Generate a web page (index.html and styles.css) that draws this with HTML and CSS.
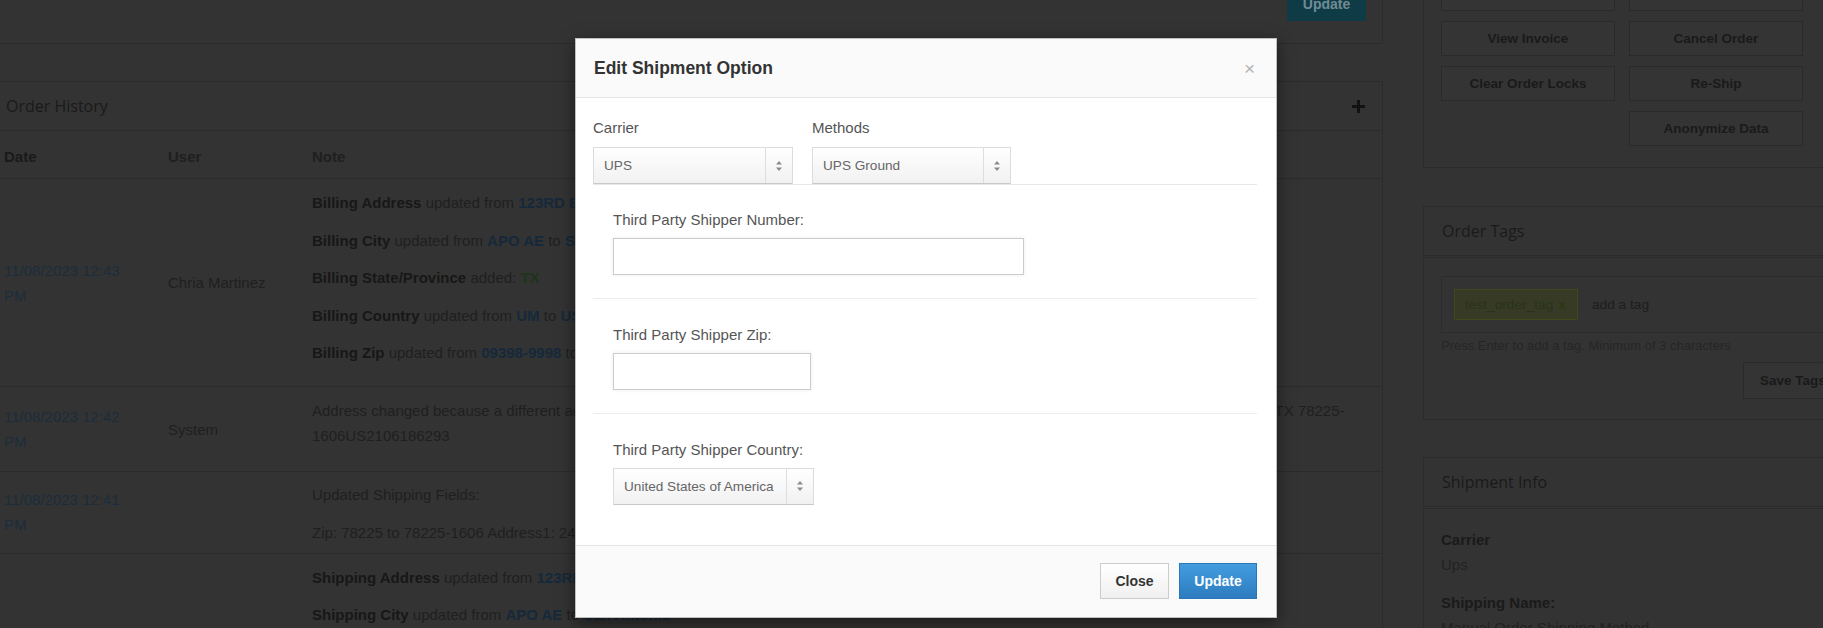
FILE: index.html
```html
<!DOCTYPE html>
<html lang="en">
<head>
<meta charset="utf-8">
<title>Order - Edit Shipment Option</title>
<link rel="stylesheet" href="styles.css">
</head>
<body>
<div class="page">
  <div class="main">
    <div class="panel panel-top">
      <button class="btn-teal">Update</button>
    </div>

    <div class="panel history">
      <div class="panel-heading">
        <h3 class="heading-title">Order History</h3>
        <svg class="plus" width="13" height="13" viewBox="0 0 13 13"><path d="M5 0h3v5h5v3H8v5H5V8H0V5h5z" fill="currentColor"/></svg>
      </div>
      <div class="hrow head">
        <div class="c-date">Date</div>
        <div class="c-user">User</div>
        <div class="c-note">Note</div>
      </div>

      <div class="hrow">
        <div class="c-date"><a class="date-link">11/08/2023 12:43 PM</a></div>
        <div class="c-user">Chria Martinez</div>
        <div class="c-note note-long">
          <p><b>Billing Address</b> updated from <b class="val">123RD BN 6</b> to <b class="val">2400 W Military Dr</b></p>
          <p><b>Billing City</b> updated from <b class="val">APO AE</b> to <b class="val">San Antonio</b></p>
          <p><b>Billing State/Province</b> added: <b class="val-add">TX</b></p>
          <p><b>Billing Country</b> updated from <b class="val">UM</b> to <b class="val">US</b></p>
          <p><b>Billing Zip</b> updated from <b class="val">09398-9998</b> to <b class="val">78225-1606</b></p>
        </div>
      </div>

      <div class="hrow">
        <div class="c-date"><a class="date-link">11/08/2023 12:42 PM</a></div>
        <div class="c-user">System</div>
        <div class="c-note note-mid">
          <p>Address changed because a different address was returned by the address validation service now, for this order: 2400 W Military Dr San Antonio TX 78225-<br>1606US2106186293</p>
        </div>
      </div>

      <div class="hrow">
        <div class="c-date"><a class="date-link">11/08/2023 12:41 PM</a></div>
        <div class="c-user"></div>
        <div class="c-note note-short">
          <p>Updated Shipping Fields:</p>
          <p>Zip: 78225 to 78225-1606 Address1: 2400 W Military Dr to 2400 W MILITARY DR</p>
        </div>
      </div>

      <div class="hrow">
        <div class="c-date"><a class="date-link">11/08/2023 12:40 PM</a></div>
        <div class="c-user">Chria Martinez</div>
        <div class="c-note note-long">
          <p><b>Shipping Address</b> updated from <b class="val">123RD BN 6</b> to <b class="val">2400 W Military Dr</b></p>
          <p><b>Shipping City</b> updated from <b class="val">APO AE</b> to <b class="val">San Antonio</b></p>
          <p><b>Shipping State/Province</b> added: <b class="val-add">TX</b></p>
          <p><b>Shipping Country</b> updated from <b class="val">UM</b> to <b class="val">US</b></p>
          <p><b>Shipping Zip</b> updated from <b class="val">09398-9998</b> to <b class="val">78225-1606</b></p>
        </div>
      </div>
    </div>
  </div>

  <div class="side">
    <div class="panel actions">
      <div class="action-grid">
        <button class="btn-ghost" aria-label="Edit Order"></button>
        <button class="btn-ghost" aria-label="Print Packing Slip"></button>
        <button class="btn-ghost">View Invoice</button>
        <button class="btn-ghost">Cancel Order</button>
        <button class="btn-ghost">Clear Order Locks</button>
        <button class="btn-ghost">Re-Ship</button>
        <button class="btn-ghost col2">Anonymize Data</button>
      </div>
    </div>

    <div class="panel side-heading tags-heading"><h3 class="heading-title">Order Tags</h3></div>
    <div class="panel side-body tags-body">
      <div class="tag-box">
        <span class="tag">test_order_tag <b class="tag-x">x</b></span>
        <span class="tag-input">add a tag</span>
      </div>
      <div class="help">Press Enter to add a tag. Minimum of 3 characters</div>
      <div class="save-row"><button class="btn-ghost save">Save Tags</button></div>
    </div>

    <div class="panel side-heading ship-heading"><h3 class="heading-title">Shipment Info</h3></div>
    <div class="panel side-body ship-body">
      <div class="info-label">Carrier</div>
      <div class="info-value">Ups</div>
      <div class="info-label second">Shipping Name:</div>
      <div class="info-value">Manual Order Shipping Method</div>
    </div>
  </div>
</div>

<div class="modal">
  <div class="modal-header">
    <h4 class="modal-title">Edit Shipment Option</h4>
    <span class="modal-close">×</span>
  </div>
  <div class="modal-body">
    <div class="select-row">
      <div class="field">
        <label class="lbl">Carrier</label>
        <div class="select w-carrier"><span class="select-text">UPS</span><span class="select-arrow"><svg width="6" height="10" viewBox="0 0 6 10"><path d="M3 0L6 3.5H0z M3 10L0 6.5H6z" fill="#8a8a8a"/></svg></span></div>
      </div>
      <div class="field">
        <label class="lbl">Methods</label>
        <div class="select w-method"><span class="select-text">UPS Ground</span><span class="select-arrow"><svg width="6" height="10" viewBox="0 0 6 10"><path d="M3 0L6 3.5H0z M3 10L0 6.5H6z" fill="#8a8a8a"/></svg></span></div>
      </div>
    </div>

    <div class="section">
      <label class="lbl">Third Party Shipper Number:</label>
      <div class="input w-number"></div>
    </div>
    <div class="section">
      <label class="lbl">Third Party Shipper Zip:</label>
      <div class="input w-zip"></div>
    </div>
    <div class="section last">
      <label class="lbl">Third Party Shipper Country:</label>
      <div class="select w-country"><span class="select-text">United States of America</span><span class="select-arrow"><svg width="6" height="10" viewBox="0 0 6 10"><path d="M3 0L6 3.5H0z M3 10L0 6.5H6z" fill="#8a8a8a"/></svg></span></div>
    </div>
  </div>
  <div class="modal-footer">
    <button class="btn-close">Close</button>
    <button class="btn-primary">Update</button>
  </div>
</div>
</body>
</html>
```

FILE: styles.css
```css
* { box-sizing: border-box; }

html, body {
  margin: 0;
  padding: 0;
}

body {
  width: 1823px;
  height: 628px;
  overflow: hidden;
  background: #333333;
  font-family: "Liberation Sans", Arial, sans-serif;
  font-size: 15px;
  color: #232323;
  position: relative;
}

button { font-family: "Liberation Sans", Arial, sans-serif; }

.page {
  display: flex;
  align-items: flex-start;
}

.main {
  width: 1384px;
  margin-left: -1px;
  flex: none;
}

.side {
  width: 440px;
  margin-left: 40px;
  flex: none;
}

.panel {
  border: 1px solid #2b2b2b;
}

/* top panel */
.panel-top {
  height: 44px;
  border-top: none;
  display: flex;
  justify-content: flex-end;
  padding-right: 16px;
}

.btn-teal {
  margin-top: -13px;
  width: 79px;
  height: 34px;
  border: none;
  background: #0f3b47;
  color: #6f8c95;
  font-weight: bold;
  font-size: 14px;
}

/* order history */
.history {
  margin-top: 37px;
}

.panel-heading {
  height: 49px;
  border-bottom: 1px solid #2b2b2b;
  display: flex;
  align-items: center;
  justify-content: space-between;
  padding: 0 17px 0 6px;
}

.heading-title {
  margin: 0;
  font-family: "Open Sans", "Liberation Sans", sans-serif;
  font-weight: normal;
  font-size: 16px;
  color: #1a1a1a;
}

.plus {
  color: #121212;
}

.hrow {
  display: grid;
  grid-template-columns: 164px 144px 1fr;
  border-bottom: 1px solid #2b2b2b;
}

.hrow.head {
  height: 48px;
  padding-top: 3px;
  align-items: center;
  font-weight: bold;
  color: #1a1a1a;
}

.hrow:last-child { border-bottom: none; }

.c-date {
  padding: 0 30px 0 4px;
  align-self: center;
  line-height: 25px;
}

.c-user {
  padding-left: 4px;
  align-self: center;
  color: #1f1f1f;
}

.date-link {
  color: #1b2d3c;
}

.c-note {
  padding: 11px 36px 10px 4px;
  color: #1f1f1f;
}

.c-note p {
  margin: 0 0 12.5px;
  line-height: 25px;
}

.c-note p:last-child { margin-bottom: 0; }

.c-note b { color: #171717; }
.c-note b.val { color: #15293b; }
.c-note b.val-add { color: #1d3518; }

.note-long { padding-bottom: 21px; }
.note-mid { padding-bottom: 23px; }
.note-short { padding-top: 10px; padding-bottom: 8px; }

/* side */
.actions {
  margin-top: -45px;
  padding: 20px 18px 21px 17px;
}

.action-grid {
  display: grid;
  grid-template-columns: 174px 174px;
  grid-auto-rows: 35px;
  column-gap: 14px;
  row-gap: 10px;
}

.btn-ghost {
  background: #343434;
  border: 1px solid #2a2a2a;
  color: #1a1a1a;
  font-weight: bold;
  font-size: 13.5px;
  padding: 0;
}

.col2 { grid-column: 2; }

.side-heading {
  height: 50px;
  display: flex;
  align-items: center;
  padding-left: 18px;
}

.side-body {
  margin-top: 1px;
  padding: 18px 18px 20px 17px;
}

.tags-heading { margin-top: 38px; }

.tag-box {
  height: 57px;
  border: 1px solid #2c2c2c;
  padding: 13px 12px;
  display: flex;
  align-items: center;
  gap: 14px;
}

.tag {
  height: 31px;
  display: inline-flex;
  align-items: center;
  padding: 0 11px 0 10px;
  background: #373b25;
  border: 1px solid #3f471d;
  color: #29321a;
  font-size: 13.7px;
}

.tag-x {
  margin-left: 5px;
  color: #2b3712;
}

.tag-input {
  color: #1d1d1d;
  font-size: 13.7px;
}

.help {
  margin-top: 4px;
  line-height: 17px;
  font-size: 13px;
  color: #262626;
}

.save-row {
  display: flex;
  justify-content: flex-end;
  margin-top: 8px;
  padding-right: 1px;
}

.btn-ghost.save {
  width: 100px;
  height: 37px;
  text-align: left;
  padding-left: 16px;
  font-size: 13.5px;
}

.ship-heading { margin-top: 37px; }

.ship-body {
  padding-top: 20px;
}

.info-label {
  font-weight: bold;
  color: #1a1a1a;
  line-height: 22px;
}

.info-label.second { margin-top: 16px; }

.info-value {
  color: #222222;
  line-height: 22px;
  margin-top: 3px;
}

/* modal */
.modal {
  position: absolute;
  left: 575px;
  top: 38px;
  width: 702px;
  background: #ffffff;
  border: 1px solid rgba(0, 0, 0, 0.25);
  box-shadow: 0 5px 15px rgba(0, 0, 0, 0.5);
}

.modal-header {
  height: 59px;
  background: #fafafa;
  border-bottom: 1px solid #e5e5e5;
  display: flex;
  align-items: center;
  justify-content: space-between;
  padding: 0 21px 0 18px;
}

.modal-title {
  margin: 0;
  font-size: 17.5px;
  font-weight: bold;
  color: #333333;
}

.modal-close {
  font-size: 19px;
  color: #b5b5b5;
  line-height: 1;
}

.modal-body {
  padding: 21px 19px 0 17px;
}

.select-row {
  display: flex;
  gap: 19px;
  border-bottom: 1px solid #e8e8e8;
}

.lbl {
  display: block;
  line-height: 17px;
  font-size: 15px;
  color: #555555;
  margin-bottom: 10px;
}

.select-row .lbl { margin-bottom: 11px; }

.select {
  height: 37px;
  display: flex;
  align-items: stretch;
  border: 1px solid #dcdcdc;
  border-bottom-color: #c8c8c8;
  background: linear-gradient(#ffffff, #f1f1f1);
  font-size: 13.6px;
  color: #666666;
}

.select-text {
  flex: 1;
  display: flex;
  align-items: center;
  padding-left: 10px;
}

.select-arrow {
  width: 27px;
  border-left: 1px solid #dedede;
  display: flex;
  align-items: center;
  justify-content: center;
}

.w-carrier { width: 200px; }
.w-method { width: 199px; }
.w-country { width: 201px; }

.section {
  padding: 27px 0 23px 20px;
  border-bottom: 1px solid #ececec;
}

.select-row + .section { padding-top: 26px; padding-bottom: 22.5px; }

.section.last {
  border-bottom: none;
  padding-bottom: 40.5px;
}

.input {
  height: 37px;
  border: 1px solid #cccccc;
  background: #ffffff;
  box-shadow: 0 0 3px 1px rgba(0, 0, 0, 0.05);
}

.w-number { width: 411px; }
.w-zip { width: 198px; }

.modal-footer {
  border-top: 1px solid #e5e5e5;
  background: #fafafa;
  padding: 17px 19px 18px;
  display: flex;
  justify-content: flex-end;
  gap: 10px;
}

.btn-close {
  width: 69px;
  height: 36px;
  border: 1px solid #cccccc;
  background: linear-gradient(#ffffff, #f0f0f0);
  color: #333333;
  font-weight: bold;
  font-size: 14px;
  padding: 0;
}

.btn-primary {
  width: 78px;
  height: 36px;
  border: 1px solid #2a76b6;
  background: linear-gradient(#439ddf, #2c7cbf);
  color: #ffffff;
  font-weight: bold;
  font-size: 14px;
  padding: 0;
}
```
